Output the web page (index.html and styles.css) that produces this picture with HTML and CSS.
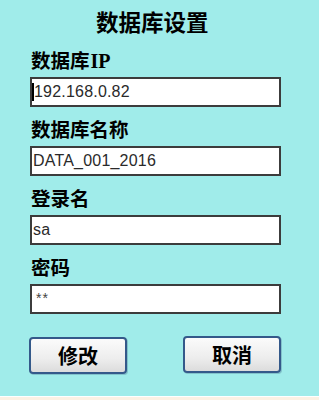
FILE: index.html
```html
<!DOCTYPE html>
<html lang="zh-CN">
<head>
<meta charset="utf-8">
<title>数据库设置</title>
<link rel="stylesheet" href="styles.css">
</head>
<body>
<div class="page">
  <main class="panel">
    <h1 class="title">数据库设置</h1>
    <div class="fields">
      <div class="field">
        <div class="label">数据库<span class="latin">IP</span></div>
        <div class="box"><span class="caret"></span><span class="value first">192.168.0.82</span></div>
      </div>
      <div class="field">
        <div class="label">数据库名称</div>
        <div class="box"><span class="value">DATA_001_2016</span></div>
      </div>
      <div class="field">
        <div class="label">登录名</div>
        <div class="box"><span class="value">sa</span></div>
      </div>
      <div class="field">
        <div class="label">密码</div>
        <div class="box"><span class="value pwd">**</span></div>
      </div>
    </div>
    <div class="actions">
      <button class="btn btn-ok" type="button">修改</button>
      <button class="btn btn-cancel" type="button">取消</button>
    </div>
  </main>
  <footer class="strip"></footer>
</div>
</body>
</html>
```

FILE: styles.css
```css
html, body {
  margin: 0;
  padding: 0;
}
body {
  width: 319px;
  height: 400px;
  overflow: hidden;
  font-family: "Noto Sans CJK SC", "Liberation Sans", sans-serif;
  color: #000;
}
.page {
  height: 400px;
  display: flex;
  flex-direction: column;
}
.panel {
  flex: 1;
  background: #a0ecea;
  padding: 9px 38px 0 30px;
  display: flex;
  flex-direction: column;
}
.title {
  margin: 0;
  font-size: 22.5px;
  line-height: 24px;
  height: 24px;
  font-weight: 700;
  text-align: left;
  padding-left: 66px;
}
.fields {
  margin-top: 17px;
  display: flex;
  flex-direction: column;
  gap: 12px;
}
.field {
  display: flex;
  flex-direction: column;
  gap: 7px;
}
.label {
  font-size: 19.5px;
  line-height: 20px;
  height: 20px;
  font-weight: 700;
  padding-left: 1px;
}
.latin {
  font-family: "Liberation Serif", serif;
  font-weight: 700;
  font-size: 20px;
  margin-left: 1px;
}
.box {
  height: 26px;
  border: 2px solid #3c3c3c;
  background: #fff;
  display: flex;
  align-items: center;
  font-family: "Liberation Sans", sans-serif;
  font-size: 16px;
  color: #2a2a2a;
}
.value {
  padding-left: 1px;
  letter-spacing: 0.2px;
}
.value.first {
  padding-left: 0;
}
.caret {
  width: 2px;
  height: 18px;
  background: #000;
  flex: none;
}
.pwd {
  font-size: 14px;
  letter-spacing: 1px;
  padding-left: 4px;
  align-self: flex-start;
  margin-top: 4px;
  color: #444;
}
.actions {
  margin-top: 22px;
  display: flex;
  justify-content: space-between;
}
.btn {
  width: 98px;
  height: 37px;
  border: 2px solid #34598a;
  border-radius: 4px;
  background: linear-gradient(#fbfbfb, #ededed 60%, #dcdcdc);
  font-family: "Noto Sans CJK SC", sans-serif;
  font-size: 20px;
  font-weight: 700;
  color: #000;
  padding: 0;
  line-height: 20px;
  box-shadow: 1px 1px 0 rgba(40, 70, 110, 0.25);
}
.btn-ok {
  margin-top: 1px;
  margin-left: -1px;
}
.strip {
  height: 4px;
  border-top: 1px solid #ffffff;
  background: #fcf1e4;
  box-sizing: border-box;
}
```
